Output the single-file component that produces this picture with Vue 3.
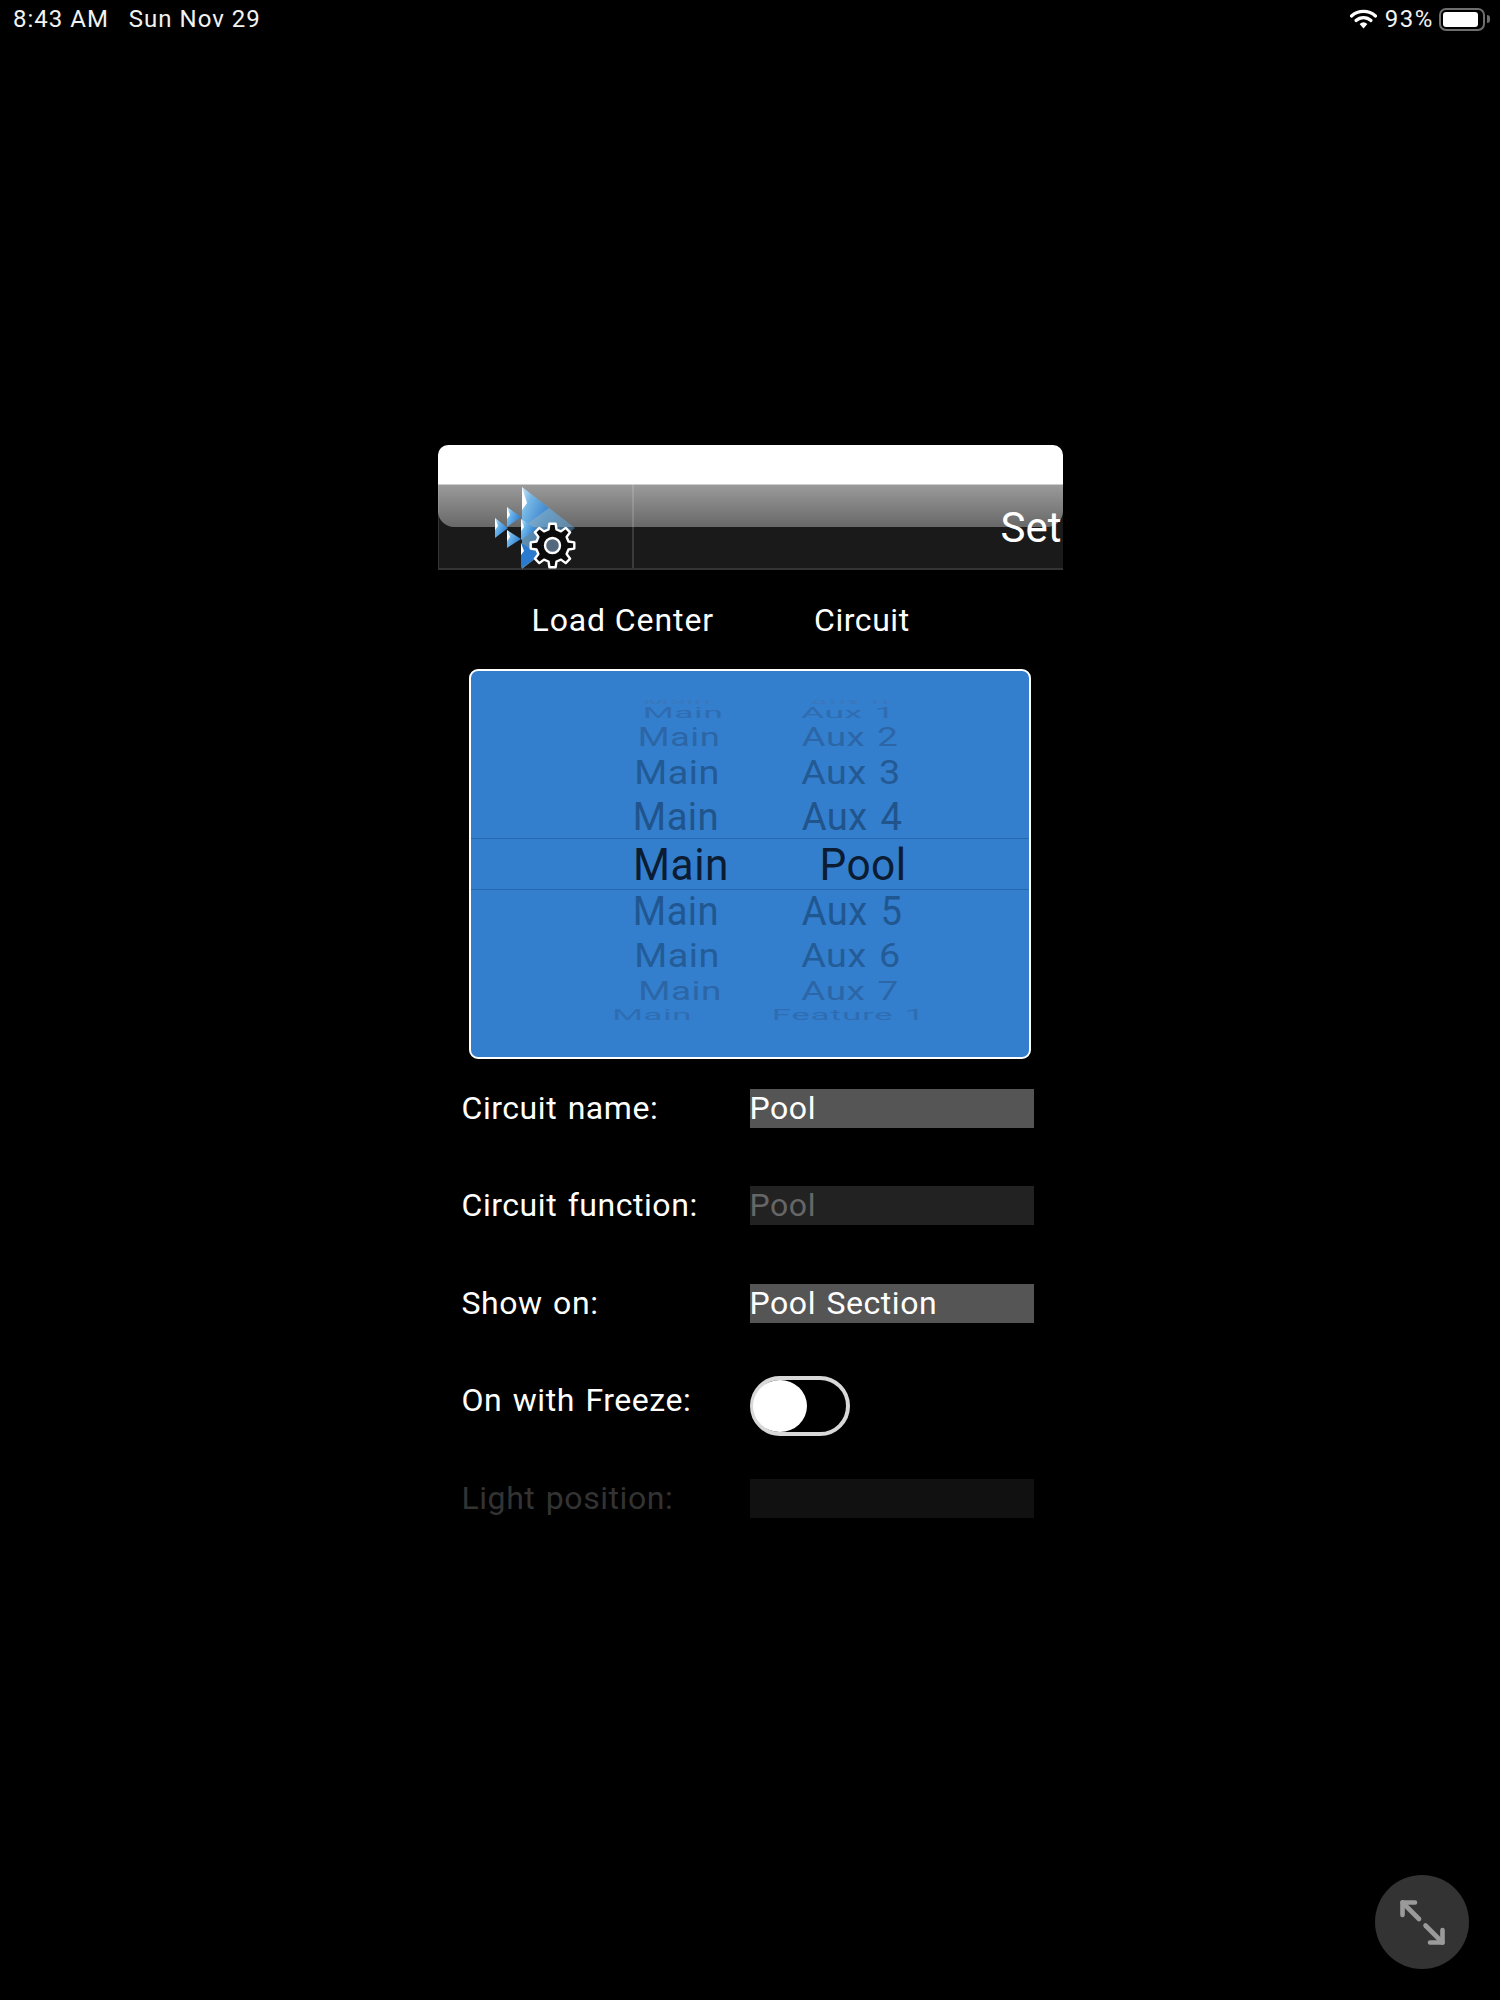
<script setup>
const rows = [
  { h: 4, main: 'Main', aux: 'Aux 0', sx: 0.72, sy: 0.3, dm: 0, da: -2, c: '#3a77bc', clip: true },
  { h: 19, main: 'Main', aux: 'Aux 1', sx: 0.85, sy: 0.37, dm: 6, da: -3, c: '#2f6cb0' },
  { h: 30, main: 'Main', aux: 'Aux 2', sx: 0.87, sy: 0.6, dm: 2, da: -1, c: '#2c66a6' },
  { h: 40, main: 'Main', aux: 'Aux 3', sx: 0.9, sy: 0.8, dm: 0, da: 0, c: '#235a94' },
  { h: 48, main: 'Main', aux: 'Aux 4', sx: 0.91, sy: 0.93, dm: -1, da: 1, c: '#20548b' },
  { h: 48, main: 'Main', aux: 'Pool', sx: 1.01, sy: 1.07, dm: 4, da: 12, c: '#0b1c33' },
  { h: 47, main: 'Main', aux: 'Aux 5', sx: 0.91, sy: 0.95, dm: -1, da: 1, c: '#215791' },
  { h: 40, main: 'Main', aux: 'Aux 6', sx: 0.9, sy: 0.8, dm: 0, da: 0, c: '#245c97' },
  { h: 32, main: 'Main', aux: 'Aux 7', sx: 0.88, sy: 0.6, dm: 3, da: -1, c: '#2c66a6' },
  { h: 15, main: 'Main', aux: 'Feature 1', sx: 0.84, sy: 0.37, dm: -25, da: -12, c: '#2f6db2' }
]
const style = (r, d) => ({
  color: r.c,
  transform: `translateX(${d}px) scale(${r.sx}, ${r.sy})`
})

const gear = (() => {
  const cx = 552.5, cy = 545.5, out = 22, inn = 16.5, n = 8
  const pts = []
  for (let i = 0; i < n; i++) {
    const a = (i / n) * Math.PI * 2
    const w = Math.PI / n
    const seq = [
      [inn, a - w * 0.62],
      [out, a - w * 0.36],
      [out, a + w * 0.36],
      [inn, a + w * 0.62]
    ]
    seq.forEach(([r, t]) => pts.push(`${(cx + r * Math.cos(t)).toFixed(1)},${(cy + r * Math.sin(t)).toFixed(1)}`))
  }
  return pts.join(' ')
})()
</script>

<template>
  <div class="page">
    <header class="status">
      <div class="status-left">
        <span>8:43 AM</span>
        <span>Sun Nov 29</span>
      </div>
      <div class="status-right">
        <svg class="wifi" width="27" height="20" viewBox="0 0 27 20">
          <path d="M1.5 7 A18 18 0 0 1 25.5 7" fill="none" stroke="#fff" stroke-width="3.2" stroke-linecap="round" />
          <path d="M6 11.5 A11 11 0 0 1 21 11.5" fill="none" stroke="#fff" stroke-width="3.2" stroke-linecap="round" />
          <path d="M9.6 15 L13.5 19.5 L17.4 15 A6 6 0 0 0 9.6 15 Z" fill="#fff" />
        </svg>
        <span class="pct">93%</span>
        <div class="battery"><div class="battery-fill"></div></div>
        <div class="nub"></div>
      </div>
    </header>

    <main class="main">
      <div class="toolbar">
        <div class="bar">
          <div class="bar-icon"></div>
          <div class="bar-rest"></div>
        </div>
        <div class="gloss"></div>
        <svg class="logo" width="100" height="90" viewBox="490 484 100 90">
          <defs>
            <linearGradient id="tri" x1="0" y1="0" x2="1" y2="0.6">
              <stop offset="0" stop-color="#dff2ff" />
              <stop offset="0.35" stop-color="#6db6ea" />
              <stop offset="1" stop-color="#2a7ad0" />
            </linearGradient>
            <linearGradient id="big" x1="0" y1="0" x2="1" y2="0.5">
              <stop offset="0" stop-color="#a5d8f8" />
              <stop offset="0.5" stop-color="#63aee8" />
              <stop offset="1" stop-color="#5aa6e2" stop-opacity="0.6" />
            </linearGradient>
          </defs>
          <polygon points="522,487 575,528 522,569" fill="url(#big)" opacity="0.7" />
          <polygon points="522,487 549,508 522,528" fill="url(#tri)" opacity="0.75" />
          <polygon points="521,519 536,529 521,540" fill="url(#tri)" />
          <polygon points="495,518 508,528 495,538" fill="url(#tri)" />
          <polygon points="507,507 521,517 507,527" fill="url(#tri)" />
          <polygon points="507,530 521,539 507,548" fill="url(#tri)" />
          <polygon points="521,543 540,555 521,568" fill="#2a7ad0" />
          <g fill="#fff">
            <polygon points="522,487 527,503 522,510" />
            <polygon points="495,518 498,526 495,530" />
            <polygon points="507,507 510,515 507,519" />
            <polygon points="521,519 524,527 521,531" />
            <polygon points="507,530 510,537 507,541" />
            <polygon points="521,543 524,551 521,555" />
          </g>
          <polygon :points="gear" fill="#0a0a0a" stroke="#fff" stroke-width="2.4" stroke-linejoin="round" />
          <circle cx="552.5" cy="545.5" r="7.5" fill="#54697d" stroke="#fff" stroke-width="2.4" />
        </svg>
        <div class="set-clip"><span class="set">Set</span></div>
      </div>

      <div class="col-heads">
        <span class="head-load">Load Center</span>
        <span>Circuit</span>
      </div>

      <section class="picker">
        <div class="band"></div>
        <div class="wheel">
          <div
            v-for="(r, i) in rows"
            :key="i"
            class="wheel-row"
            :style="{ height: r.h + 'px' }"
          >
            <span class="cell" :style="style(r, r.dm)">{{ r.main }}</span>
            <span class="cell" :style="style(r, r.da)">{{ r.aux }}</span>
          </div>
        </div>
      </section>

      <section class="form">
        <div class="label">Circuit name:</div>
        <div class="field">Pool</div>
        <div class="label">Circuit function:</div>
        <div class="field disabled">Pool</div>
        <div class="label">Show on:</div>
        <div class="field">Pool Section</div>
        <div class="label">On with Freeze:</div>
        <div class="toggle-cell">
          <div class="toggle"><div class="knob"></div></div>
        </div>
        <div class="label faint">Light position:</div>
        <div class="field faint-field"></div>
      </section>
    </main>

    <button class="expand">
      <svg width="94" height="94" viewBox="0 0 94 94">
        <g fill="none" stroke="#9a9a9a" stroke-width="4.6" stroke-linecap="round" stroke-linejoin="round">
          <path d="M44 44 L27.5 27.5" />
          <path d="M40 27.5 H27.5 V40" />
          <path d="M50.5 50.5 L67.5 67.5" />
          <path d="M67.5 55 V67.5 H55" />
        </g>
      </svg>
    </button>
  </div>
</template>

<style>
html, body { background: #000; margin: 0; }
</style>

<style scoped>
.page {
  position: relative;
  width: 1500px;
  height: 2000px;
  background: #000;
  color: #fff;
  font-family: Roboto, "Liberation Sans", sans-serif;
  overflow: hidden;
}
.status {
  height: 38px;
  display: flex;
  justify-content: space-between;
  align-items: center;
  padding: 0 10px 0 13px;
  font-size: 24px;
  letter-spacing: 1px;
  color: #f2f2f2;
}
.status-left { display: flex; gap: 20px; }
.status-right { display: flex; align-items: center; }
.wifi { margin-right: 8px; }
.pct { margin-right: 5px; letter-spacing: 1.6px; }
.battery {
  width: 46px;
  height: 23px;
  box-sizing: border-box;
  border: 2px solid #6e6e6e;
  border-radius: 7px;
  padding: 2px;
}
.battery-fill { width: 92%; height: 100%; background: #fff; border-radius: 3px; }
.nub { width: 3px; height: 8px; margin-left: 2px; background: #6e6e6e; border-radius: 0 3px 3px 0; }

.main {
  width: 625px;
  margin: 407px auto 0;
}
.toolbar { position: relative; height: 125px; }
.bar {
  position: absolute;
  left: 0; right: 0; bottom: 0;
  height: 86px;
  box-sizing: border-box;
  display: flex;
  background: #1a1a1a;
  border-bottom: 2px solid #333;
  border-left: 1px solid #333;
}
.bar-icon { width: 193px; border-right: 2px solid #3a3a3a; }
.bar-rest { flex: 1; }
.gloss {
  position: absolute;
  left: 0; right: 0; top: 0;
  height: 82px;
  border-radius: 10px 10px 16px 16px;
  background: linear-gradient(#fff 0, #fff 39px, rgba(255, 255, 255, 0.56) 40px, rgba(255, 255, 255, 0.34) 100%);
}
.logo { position: absolute; left: 52.5px; top: 39px; }
.set-clip {
  position: absolute;
  inset: 0;
  overflow: hidden;
}
.set {
  position: absolute;
  left: 563px;
  top: 47px;
  font-size: 42px;
  line-height: 72px;
}

.col-heads {
  display: flex;
  height: 98.5px;
  padding-left: 94px;
  gap: 100px;
  font-size: 32px;
  line-height: 100px;
  letter-spacing: 0.55px;
}
.head-load { letter-spacing: 0.9px; }
.picker {
  position: relative;
  width: 562px;
  height: 390px;
  margin-left: 31px;
  box-sizing: border-box;
  border: 2px solid #fff;
  border-radius: 9px;
  background: #337fce;
  overflow: hidden;
}
.band {
  position: absolute;
  left: 0; right: 0;
  top: 167px;
  height: 52px;
  box-sizing: border-box;
  border-top: 1px solid #2668ad;
  border-bottom: 1px solid #2668ad;
}
.wheel { padding: 29px 0 0 126px; position: relative; }
.wheel-row {
  display: flex;
  gap: 14px;
  align-items: center;
  overflow: hidden;
}
.cell {
  flex: none;
  width: 160px;
  text-align: center;
  font-size: 42px;
  line-height: 50px;
  letter-spacing: 0.5px;
  word-spacing: 3px;
  white-space: nowrap;
}

.form {
  display: grid;
  grid-template-columns: 288px 284px;
  grid-auto-rows: 39px;
  row-gap: 58.5px;
  padding: 30px 0 0 24px;
  font-size: 32px;
  line-height: 39px;
  letter-spacing: 0.55px;
  word-spacing: 2px;
}
.label { white-space: nowrap; }
.field {
  background: #555;
  white-space: nowrap;
  height: 39px;
}
.disabled { background: #222; color: #666; }
.faint { color: #333; }
.faint-field { background: #111; }
.toggle-cell { height: 39px; }
.toggle {
  width: 100px;
  height: 60px;
  margin-top: -5px;
  box-sizing: border-box;
  border: 4px solid #d8d8d8;
  border-radius: 30px;
  position: relative;
}
.knob {
  position: absolute;
  left: -1px;
  top: 0;
  width: 54px;
  height: 52px;
  border-radius: 50%;
  background: #fff;
}
.expand {
  position: absolute;
  left: 1375px;
  top: 1875px;
  width: 94px;
  height: 94px;
  padding: 0;
  border: 0;
  border-radius: 50%;
  background: #333;
}
.expand svg { display: block; }
</style>
